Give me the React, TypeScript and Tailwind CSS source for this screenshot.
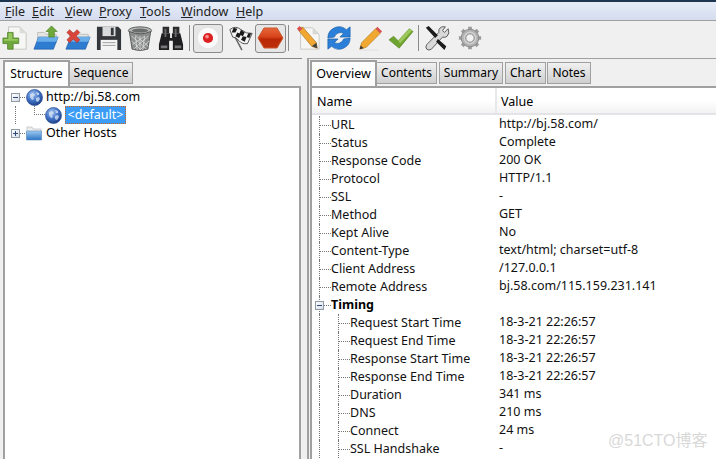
import React from "react";

function Globe({ size = 17, id }: { size?: number; id: string }) {
  return (
    <svg width={size} height={size} viewBox="0 0 17 17" className="shrink-0">
      <defs>
        <radialGradient id={id} cx="0.4" cy="0.3" r="0.75">
          <stop offset="0" stopColor="#a4c3ee" />
          <stop offset="0.55" stopColor="#3f72c6" />
          <stop offset="1" stopColor="#1a3a80" />
        </radialGradient>
      </defs>
      <circle cx="8.5" cy="8.5" r="8" fill={`url(#${id})`} stroke="#2a4f96" strokeWidth="0.7" />
      <path d="M4 5l3-1 2 2-2 2 1 2-2 1-2-3zM10 9l3-1 1 2-2 3-2-1zM10 3l3 1 0 2-2 0z" fill="#dbe7f8" opacity="0.75" />
    </svg>
  );
}

function Folder() {
  return (
    <svg width="16" height="16" viewBox="0 0 16 16" className="shrink-0">
      <defs>
        <linearGradient id="fo" x1="0" y1="0" x2="0" y2="1">
          <stop offset="0" stopColor="#9ccaf0" />
          <stop offset="1" stopColor="#2c74c4" />
        </linearGradient>
      </defs>
      <path d="M1 2h5l1 2h8v10H1z" fill="#eceded" stroke="#b0b3b6" strokeWidth="0.6" />
      <path d="M0.5 6h15v9H.5z" fill="url(#fo)" stroke="#5b8cc0" strokeWidth="0.6" />
    </svg>
  );
}

function Expander({ open }: { open?: boolean }) {
  return (
    <span className="relative z-10 block w-[9px] h-[9px] border border-[#8d9aa8] bg-gradient-to-br from-white to-[#d8dde6] shrink-0">
      <span className="absolute left-[1px] top-[3px] w-[5px] h-px bg-[#2d4a7a]" />
      {!open && <span className="absolute left-[3px] top-[1px] w-px h-[5px] bg-[#2d4a7a]" />}
    </span>
  );
}

const Ic = ({ children, ml }: { children: React.ReactNode; ml?: string }) => (
  <svg width="26" height="26" viewBox="0 0 28 28" className={`shrink-0 ${ml ?? ""}`}>{children}</svg>
);

function IconAdd() {
  return (
    <Ic>
      <path d="M7 2h12l7 7v17H7z" fill="#f6f6f4" stroke="#c4c4c0" />
      <path d="M19 2v7h7z" fill="#dcdcd8" />
      <path d="M6 8h6v6h6v6h-6v6H6v-6H1v-6h5z" fill="#6fa83c" stroke="#4b7d22" strokeWidth="0.8" />
      <path d="M7 9h4v6H7zM2 15h15v2H2z" fill="#96c95f" />
    </Ic>
  );
}
function FolderOpen({ children, ml }: { children: React.ReactNode; ml?: string }) {
  return (
    <Ic ml={ml}>
      <path d="M5 8h7l2 2h11v9H5z" fill="#e6e6e2" stroke="#aaa" strokeWidth="0.7" />
      <path d="M6 13h21l-5 13H1z" fill="#2d7cd0" stroke="#1d5aa3" strokeWidth="0.7" />
      <path d="M6 13h21l-2 5H4z" fill="#69aeea" />
      {children}
    </Ic>
  );
}
function IconSave({ ml }: { ml?: string }) {
  return (
    <Ic ml={ml}>
      <path d="M1 2h23l3 3v22H1z" fill="#33363a" />
      <rect x="7" y="2" width="14" height="10" fill="#d8dadc" />
      <rect x="16" y="3" width="3" height="8" fill="#33363a" />
      <rect x="5" y="16" width="18" height="11" fill="#f4f4f4" />
      <path d="M7 19h14M7 22h14" stroke="#999" />
    </Ic>
  );
}
function IconTrash({ ml }: { ml?: string }) {
  return (
    <Ic ml={ml}>
      <ellipse cx="14" cy="6" rx="12.5" ry="4" fill="#b8baba" stroke="#555" />
      <ellipse cx="14" cy="6" rx="9" ry="2.2" fill="#6b6d6d" />
      <path d="M2.5 7l3 19q8 3 17 0l3-19q-11 5-23 0z" fill="#8c8e8e" stroke="#555" />
      <path d="M5 12l16 14M9 11l14 12M5 17l10 10M23 12L7 26M19 12L6 21M24 17L14 27M14 12v15M9 12l2 15M19 12l-2 15" stroke="#e0e0e0" strokeWidth="0.8" />
    </Ic>
  );
}
function IconBino({ ml }: { ml?: string }) {
  return (
    <Ic ml={ml}>
      <path d="M5 2h7v7H5zM16 2h7v7h-7z" fill="#2a2a2c" />
      <path d="M4 9h9v5h2V9h9l3 12v6H16V17h-4v10H1v-6z" fill="#1f1f21" />
      <path d="M3 22h7v3H3zM18 22h7v3h-7z" fill="#77777b" />
      <path d="M7 4h2v9H7zM18 4h2v9h-2z" fill="#6a6a6e" />
    </Ic>
  );
}
function IconRecord() {
  return (
    <Ic>
      <circle cx="14" cy="14" r="11.5" fill="#fafafa" stroke="#e2e2e2" />
      <circle cx="14" cy="14" r="5.5" fill="#dc1f1f" />
      <circle cx="13" cy="12.5" r="2" fill="#f98c8c" />
    </Ic>
  );
}
function IconFlag({ ml }: { ml?: string }) {
  return (
    <Ic ml={ml}>
      <path d="M5 8l10 19" stroke="#666" strokeWidth="1.6" />
      <path d="M2 5q6-5 12 0t12 4l-5 11q-6 1-9-3t-7-4z" fill="#f4f4f4" stroke="#222" strokeWidth="0.8" />
      <path d="M6 3l4 1-2 4-4 0zM14 5l4 3-2 4-4-2zM10 8l4 2-2 4-4-2zM22 9l3 0-2 5-3-1zM16 12l4 1-2 5-4-2z" fill="#1a1a1a" />
    </Ic>
  );
}
function IconStop() {
  return (
    <svg width="27" height="24" viewBox="0 0 27 24" className="shrink-0">
      <defs>
        <linearGradient id="stp" x1="0" y1="0" x2="0" y2="1">
          <stop offset="0" stopColor="#e8663a" />
          <stop offset="0.45" stopColor="#d6431a" />
          <stop offset="0.55" stopColor="#b92805" />
          <stop offset="1" stopColor="#bd300a" />
        </linearGradient>
      </defs>
      <path d="M7 2h13l6 10-6 10H7L1 12z" fill="url(#stp)" stroke="#c9572e" strokeWidth="1" />
    </svg>
  );
}
function IconEdit({ ml }: { ml?: string }) {
  return (
    <Ic ml={ml}>
      <path d="M6 3h13l7 7v16H6z" fill="#f6f6f4" stroke="#c8c8c4" />
      <path d="M19 3v7h7z" fill="#d8d8d4" />
      <path d="M4 6l4-4 15 17 1 6-6-2z" fill="#f0a830" stroke="#a86a10" strokeWidth="0.7" />
      <path d="M2 4l3-3 3 3-3 3z" fill="#d85050" />
      <path d="M18 23l6 2-1-6z" fill="#444" />
    </Ic>
  );
}
function IconRefresh({ ml }: { ml?: string }) {
  return (
    <Ic ml={ml}>
      <path d="M2 14A12 12 0 0 1 22 5l4-3v11H15l4-4a7 7 0 0 0-10 4z" fill="#2b7fd8" stroke="#1a5ea8" strokeWidth="0.7" />
      <path d="M26 14A12 12 0 0 1 6 23l-4 3V15h11l-4 4a7 7 0 0 0 10-4z" fill="#2b7fd8" stroke="#1a5ea8" strokeWidth="0.7" />
    </Ic>
  );
}
function IconPencil({ ml }: { ml?: string }) {
  return (
    <Ic ml={ml}>
      <path d="M3 26l2-7L20 4l5 5L10 24z" fill="#f0a830" stroke="#b37512" strokeWidth="0.7" />
      <path d="M20 4l2-2 5 5-2 2z" fill="#d85050" />
      <path d="M3 26l1-4 3 3z" fill="#333" />
      <path d="M3 27h20" stroke="#ddd" />
    </Ic>
  );
}
function IconCheck({ ml }: { ml?: string }) {
  return (
    <Ic ml={ml}>
      <path d="M1 16l5-4 5 5L23 4l4 3-15 18z" fill="#6fa32f" stroke="#55831f" strokeWidth="0.6" />
      <path d="M11 17L23 4l3 2-13 14z" fill="#9cc75a" />
    </Ic>
  );
}
function IconTools({ ml }: { ml?: string }) {
  return (
    <Ic ml={ml}>
      <path d="M26 4l-4 4-2-2 3-4q-5-1-7 3 0 2 0 3L3 21q-2 3 0 5t5 0L20 13q3 1 5-1 3-3 1-8z" fill="#d8d8d8" stroke="#444" strokeWidth="0.9" />
      <path d="M15 15l9 8-2 4-9-9zM2 3l3-2 10 10-3 3z" fill="#1c1c1c" />
    </Ic>
  );
}
function IconGear({ ml }: { ml?: string }) {
  return (
    <Ic ml={ml}>
      <path d="M14 2v24M2 14h24M5.5 5.5l17 17M22.5 5.5l-17 17" stroke="#9c9c9c" strokeWidth="4" />
      <circle cx="14" cy="14" r="9.5" fill="#b0b0b0" stroke="#8a8a8a" />
      <circle cx="14" cy="14" r="7" fill="#cfcfcf" />
      <circle cx="14" cy="14" r="4.5" fill="#f2f2f2" stroke="#7e7e7e" />
    </Ic>
  );
}

const Sep = ({ ml }: { ml: string }) => <div className={`w-px h-[26px] bg-[#8c8c8c] shrink-0 ${ml}`} />;
const Toggle = ({ children, w, ml }: { children: React.ReactNode; w: string; ml: string }) => (
  <div className={`${w} ${ml} h-[29px] flex items-center justify-center border border-[#8a8a8a] rounded-[3px] bg-[#e6e6e6] shrink-0`}>
    {children}
  </div>
);

type Row = { name: string; value: string; level: number; bold?: boolean; exp?: boolean };

const rows: Row[] = [
  { name: "URL", value: "http://bj.58.com/", level: 0 },
  { name: "Status", value: "Complete", level: 0 },
  { name: "Response Code", value: "200 OK", level: 0 },
  { name: "Protocol", value: "HTTP/1.1", level: 0 },
  { name: "SSL", value: "-", level: 0 },
  { name: "Method", value: "GET", level: 0 },
  { name: "Kept Alive", value: "No", level: 0 },
  { name: "Content-Type", value: "text/html; charset=utf-8", level: 0 },
  { name: "Client Address", value: "/127.0.0.1", level: 0 },
  { name: "Remote Address", value: "bj.58.com/115.159.231.141", level: 0 },
  { name: "Timing", value: "", level: 0, bold: true, exp: true },
  { name: "Request Start Time", value: "18-3-21 22:26:57", level: 1 },
  { name: "Request End Time", value: "18-3-21 22:26:57", level: 1 },
  { name: "Response Start Time", value: "18-3-21 22:26:57", level: 1 },
  { name: "Response End Time", value: "18-3-21 22:26:57", level: 1 },
  { name: "Duration", value: "341 ms", level: 1 },
  { name: "DNS", value: "210 ms", level: 1 },
  { name: "Connect", value: "24 ms", level: 1 },
  { name: "SSL Handshake", value: "-", level: 1 },
];

function PropRow({ r }: { r: Row }) {
  return (
    <div className="flex h-[18px] items-stretch text-[12.5px] leading-[18px] text-[#111]">
      <div className="w-[186px] shrink-0 flex items-stretch">
        <div className="w-[7px] shrink-0" />
        <div className={`relative ${r.level === 1 ? "w-[19px]" : "w-[12px]"} shrink-0 border-l border-dotted border-[#777]`}>
          {r.level === 0 && <div className="absolute left-0 right-0 top-[9px] border-t border-dotted border-[#777]" />}
          {r.exp && (
            <div className="absolute left-[-5px] top-[5px]">
              <Expander open />
            </div>
          )}
        </div>
        {r.level === 1 && (
          <div className="relative w-[12px] shrink-0 border-l border-dotted border-[#777]">
            <div className="absolute left-0 right-0 top-[9px] border-t border-dotted border-[#777]" />
          </div>
        )}
        <div className={`whitespace-nowrap ${r.bold ? "font-bold text-black" : ""}`}>{r.name}</div>
      </div>
      <div className="pl-[1px] whitespace-nowrap -mt-[1px]">{r.value}</div>
    </div>
  );
}

const activeTab = "h-[26px] bg-[#fdfdfd] border-2 border-b-0 border-[#a0a0a0] leading-[24px] text-center shrink-0";
const idleTab = "h-[22px] mb-[2px] border border-[#a0a0a0] bg-gradient-to-b from-[#f0f0f0] to-[#cfcfcf] leading-[20px] text-center text-[12px] shrink-0";

export default function App() {
  return (
    <div
      className="w-[716px] h-[459px] overflow-hidden relative flex flex-col bg-[#f0f0f0] text-[12.5px] text-black"
      style={{ fontFamily: '"Noto Sans", Tahoma, sans-serif' }}
    >
      <div className="h-[2px] bg-[#1d3550] shrink-0" />
      <div className="h-[18px] shrink-0 flex items-center pt-[1px] pl-[5px] bg-gradient-to-b from-[#e6ecf7] to-[#d4dcef] text-[12.5px] leading-[18px] text-[#222]">
        <span className="w-[27px]"><u>F</u>ile</span>
        <span className="w-[33px]"><u>E</u>dit</span>
        <span className="w-[34px]"><u>V</u>iew</span>
        <span className="w-[41px]"><u>P</u>roxy</span>
        <span className="w-[41px]"><u>T</u>ools</span>
        <span className="w-[55px]"><u>W</u>indow</span>
        <span><u>H</u>elp</span>
      </div>
      <div className="h-px bg-[#a0a0a0] shrink-0" />
      <div className="h-[37px] shrink-0 flex items-center pb-[3px] pl-[2px]">
        <IconAdd />
        <FolderOpen ml="ml-[5px]"><path d="M20 1l6 6h-3v6h-6V7h-3z" fill="#6fa83c" stroke="#4b7d22" strokeWidth="0.7" /></FolderOpen>
        <FolderOpen ml="ml-[6px]"><path d="M3 5l3-3 4 4 4-4 3 3-4 4 4 4-3 3-4-4-4 4-3-3 4-4z" fill="#d9453a" stroke="#a52a22" strokeWidth="0.6" transform="translate(-1 3)" /></FolderOpen>
        <IconSave ml="ml-[5px]" />
        <IconTrash ml="ml-[5px]" />
        <IconBino ml="ml-[5px]" />
        <Sep ml="ml-[5px]" />
        <Toggle w="w-[30px]" ml="ml-[3px]"><IconRecord /></Toggle>
        <IconFlag ml="ml-[5px]" />
        <Toggle w="w-[31px]" ml="ml-[1px]"><IconStop /></Toggle>
        <Sep ml="ml-[2px]" />
        <IconEdit ml="ml-[6px]" />
        <IconRefresh ml="ml-[5px]" />
        <IconPencil ml="ml-[5px]" />
        <IconCheck ml="ml-[5px]" />
        <Sep ml="ml-[4px]" />
        <IconTools ml="ml-[5px]" />
        <IconGear ml="ml-[7px]" />
      </div>
      <div className="flex-1 flex min-h-0">
        <div className="w-[302px] shrink-0 border-t border-[#8c8c8c] pt-[1px] pl-[3px] pr-[1px]">
          <div className="flex h-[26px] items-end">
            <div className={`${activeTab} w-[67px] text-[12px]`}>Structure</div>
            <div className={`${idleTab} w-[63px] border-l-0`}>Sequence</div>
          </div>
          <div className="h-[400px] bg-white border-2 border-[#a0a0a0]">
            <div className="h-[18px] flex items-center pl-[6px]">
              <Expander open />
              <span className="w-[5px] border-t border-dotted border-[#777] mr-[1px]" />
              <Globe id="g1" />
              <span className="ml-[3px]">http://bj.58.com</span>
            </div>
            <div className="h-[18px] flex items-stretch pl-[10px]">
              <div className="w-[19px] shrink-0 border-l border-dotted border-[#777]" />
              <div className="w-[11px] h-[9px] shrink-0 border-l border-b border-dotted border-[#777]" />
              <div className="flex items-center">
                <Globe id="g2" />
                <span className="ml-[3px] w-[61px] h-[18px] text-center bg-[#3d9cf5] text-white border border-dotted border-[#c8641e] leading-[15px]">&lt;default&gt;</span>
              </div>
            </div>
            <div className="h-[18px] flex items-center pl-[6px]">
              <Expander />
              <span className="w-[5px] border-t border-dotted border-[#777] mr-[1px]" />
              <Folder />
              <span className="ml-[4px]">Other Hosts</span>
            </div>
          </div>
        </div>
        <div className="w-[5px] shrink-0" />
        <div className="flex-1 min-w-0 border-t border-l-2 border-[#a0a0a0] pt-[1px]">
          <div className="flex h-[26px] items-end pl-[1px]">
            <div className={`${activeTab} w-[67px]`}>Overview</div>
            <div className={`${idleTab} w-[60px] border-l-0`}>Contents</div>
            <div className={`${idleTab} w-[64px] ml-[2px]`}>Summary</div>
            <div className={`${idleTab} w-[41px] ml-[2px]`}>Chart</div>
            <div className={`${idleTab} w-[44px] ml-[1px]`}>Notes</div>
          </div>
          <div className="h-[400px] ml-[1px] bg-white border-l-2 border-t-2 border-[#a0a0a0]">
            <div className="flex h-[27px] border-b-2 border-[#e4e4e6] bg-gradient-to-b from-white via-white to-[#f2f2f4] leading-[27px] text-[12.5px]">
              <div className="w-[185px] pl-[5px] border-r-2 border-[#e8e8ea] shrink-0">Name</div>
              <div className="pl-[4px]">Value</div>
            </div>
            <div className="pt-[1px]">
              {rows.map((r) => (
                <PropRow key={r.name} r={r} />
              ))}
            </div>
          </div>
        </div>
      </div>
      <div
        className="absolute left-[608px] top-[432px] text-[16px] leading-[18px] text-[#d8d8d8]"
        style={{ fontFamily: '"Liberation Sans", "Noto Sans CJK SC", sans-serif' }}
      >
        @51CTO博客
      </div>
    </div>
  );
}
